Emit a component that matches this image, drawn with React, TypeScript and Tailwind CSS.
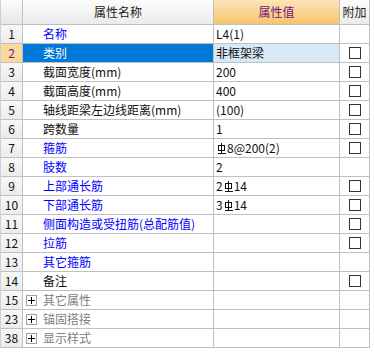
import React from "react";

type Row = {
  no: string;
  name: string;
  value?: React.ReactNode;
  tone: "blue" | "black" | "group";
  check?: boolean;
  selected?: boolean;
};

const Rebar = () => (
  <svg width="9" height="12" viewBox="0 0 9 12" className="inline-block align-[-1px] mx-[1px]" fill="none" stroke="#111" strokeWidth="1" shapeRendering="crispEdges">
    <rect x="1.5" y="3.5" width="6" height="5" />
    <line x1="4.5" y1="0.5" x2="4.5" y2="11" />
    <line x1="0.5" y1="11.5" x2="8.5" y2="11.5" />
  </svg>
);

const rows: Row[] = [
  { no: "1", name: "名称", value: "L4(1)", tone: "blue" },
  { no: "2", name: "类别", value: "非框架梁", tone: "black", check: true, selected: true },
  { no: "3", name: "截面宽度(mm)", value: "200", tone: "black", check: true },
  { no: "4", name: "截面高度(mm)", value: "400", tone: "black", check: true },
  { no: "5", name: "轴线距梁左边线距离(mm)", value: "(100)", tone: "black", check: true },
  { no: "6", name: "跨数量", value: "1", tone: "black", check: true },
  {
    no: "7",
    name: "箍筋",
    value: (
      <>
        <Rebar />8@200(2)
      </>
    ),
    tone: "blue",
    check: true,
  },
  { no: "8", name: "肢数", value: "2", tone: "blue" },
  {
    no: "9",
    name: "上部通长筋",
    value: (
      <>
        2<Rebar />14
      </>
    ),
    tone: "blue",
    check: true,
  },
  {
    no: "10",
    name: "下部通长筋",
    value: (
      <>
        3<Rebar />14
      </>
    ),
    tone: "blue",
    check: true,
  },
  { no: "11", name: "侧面构造或受扭筋(总配筋值)", tone: "blue", check: true },
  { no: "12", name: "拉筋", tone: "blue", check: true },
  { no: "13", name: "其它箍筋", tone: "blue" },
  { no: "14", name: "备注", tone: "black", check: true },
  { no: "15", name: "其它属性", tone: "group" },
  { no: "23", name: "锚固搭接", tone: "group" },
  { no: "38", name: "显示样式", tone: "group" },
];

const Plus = () => (
  <span className="flex h-[11px] w-[11px] items-center justify-center border border-[#a0a0a0] bg-white">
    <svg width="9" height="9" viewBox="0 0 9 9" shapeRendering="crispEdges">
      <line x1="1" y1="4.5" x2="8" y2="4.5" stroke="#000" strokeWidth="1" />
      <line x1="4.5" y1="1" x2="4.5" y2="8" stroke="#000" strokeWidth="1" />
    </svg>
  </span>
);

const Box = () => <span className="block h-[12px] w-[12px] border border-[#333] bg-white" />;

export default function App() {
  return (
    <div
      className="h-[352px] w-[374px] bg-white text-[12px] leading-[18px] text-black"
      style={{ fontFamily: '"Noto Sans CJK SC", "Noto Sans", sans-serif' }}
    >
      <div className="w-[370px] border-l border-[#d0d0d0]">
        {/* header */}
        <div className="grid h-[25px] grid-cols-[22px_191px_126px_30px] border-b border-[#c0c0c0]">
          <div className="border-r border-[#c0c0c0] bg-gradient-to-b from-[#fcfcfc] to-[#e6e6e6]" />
          <div className="flex items-center justify-center border-r border-[#c0c0c0] bg-gradient-to-b from-[#fcfcfc] to-[#ebebeb] text-[#222]">
            属性名称
          </div>
          <div className="flex items-center justify-center border-r border-[#c0c0c0] bg-gradient-to-b from-[#fde5b6] to-[#f5c46c] text-[#7a1080]">
            属性值
          </div>
          <div className="flex items-center justify-center border-r border-[#c0c0c0] bg-gradient-to-b from-[#fcfcfc] to-[#ebebeb] text-[#222]">
            附加
          </div>
        </div>
        {rows.map((r) => (
          <div key={r.no} className="grid h-[19px] grid-cols-[22px_191px_126px_30px] border-b border-[#c0c0c0]">
            <div
              className={
                r.selected
                  ? "flex items-center justify-center border-r border-[#c0c0c0] bg-[#fdd89c] text-[#6a1a7a]"
                  : "flex items-center justify-center border-r border-[#c0c0c0] bg-gradient-to-b from-[#f7f7f7] to-[#ececec] text-[#111]"
              }
            >
              {r.no}
            </div>
            {r.tone === "group" ? (
              <div className="flex items-center gap-[6px] border-r border-[#c0c0c0] pl-[3px] text-[#808080]">
                <Plus />
                <span>{r.name}</span>
              </div>
            ) : (
              <div
                className={
                  r.selected
                    ? "flex items-center overflow-hidden whitespace-nowrap border-r border-[#c0c0c0] bg-[#0078d7] pl-[20px] text-white"
                    : r.tone === "blue"
                    ? "flex items-center overflow-hidden whitespace-nowrap border-r border-[#c0c0c0] pl-[20px] text-[#0000ff]"
                    : "flex items-center overflow-hidden whitespace-nowrap border-r border-[#c0c0c0] pl-[20px] text-[#111]"
                }
              >
                {r.name}
              </div>
            )}
            <div
              className={
                r.selected
                  ? "flex items-center whitespace-nowrap border-r border-[#c0c0c0] bg-[#d9e8f7] pl-[2px] text-[#111]"
                  : "flex items-center whitespace-nowrap border-r border-[#c0c0c0] pl-[2px] text-[#111]"
              }
            >
              {r.value}
            </div>
            <div className="flex items-center justify-center border-r border-[#c0c0c0]">{r.check ? <Box /> : null}</div>
          </div>
        ))}
      </div>
    </div>
  );
}
